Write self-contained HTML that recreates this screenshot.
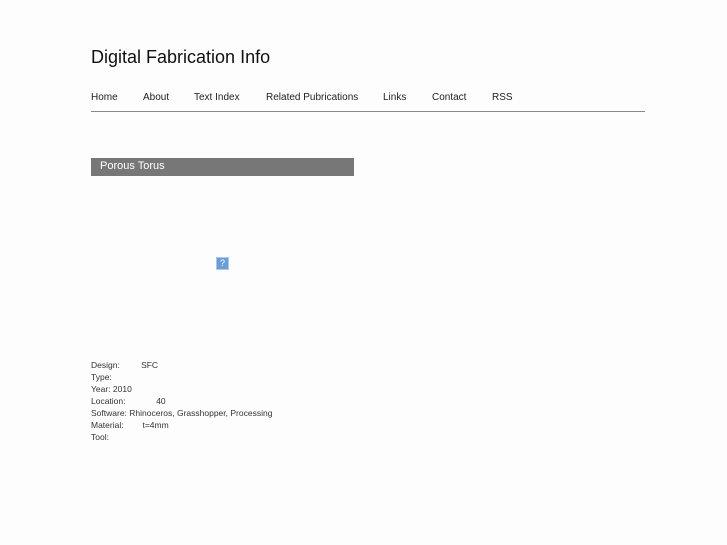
<!DOCTYPE html>
<html><head><meta charset="utf-8"><style>
body{margin:0;background:#fdfdfd;font-family:"Liberation Sans",sans-serif;color:#222;width:727px;height:545px;overflow:hidden;position:relative}
.a{position:absolute;white-space:nowrap}
.nav{font-size:10px;top:92px}
.d{font-size:8.5px;color:#333;left:91px}
</style></head><body>
<div class="a" style="left:91px;top:47px;font-size:18px;color:#111">Digital Fabrication Info</div>
<div class="a nav" style="left:91px">Home</div>
<div class="a nav" style="left:143px">About</div>
<div class="a nav" style="left:194px">Text Index</div>
<div class="a nav" style="left:266px">Related Pubrications</div>
<div class="a nav" style="left:383px">Links</div>
<div class="a nav" style="left:432px">Contact</div>
<div class="a nav" style="left:492px">RSS</div>
<div class="a" style="left:91px;top:111px;width:554px;height:1px;background:#888"></div>
<div class="a" style="left:91px;top:158px;width:263px;height:18px;background:#777;color:#fff;font-size:11px;line-height:17px;padding-left:9px;box-sizing:border-box">Porous Torus</div>
<div class="a" style="left:216px;top:257px;width:13px;height:13px;background:#6a9fd4;border:1px solid #a8c8e8;box-sizing:border-box;color:#fff;font-size:9px;text-align:center;line-height:11px">?</div>
<div class="a d" style="top:360px">Design:&nbsp;&nbsp;&nbsp;&nbsp;&nbsp;&nbsp;&nbsp;&nbsp;&nbsp;SFC</div>
<div class="a d" style="top:372px">Type:</div>
<div class="a d" style="top:384px">Year: 2010</div>
<div class="a d" style="top:396px">Location:&nbsp;&nbsp;&nbsp;&nbsp;&nbsp;&nbsp;&nbsp;&nbsp;&nbsp;&nbsp;&nbsp;&nbsp;&nbsp;40</div>
<div class="a d" style="top:408px">Software: Rhinoceros, Grasshopper, Processing</div>
<div class="a d" style="top:420px">Material:&nbsp;&nbsp;&nbsp;&nbsp;&nbsp;&nbsp;&nbsp;&nbsp;t=4mm</div>
<div class="a d" style="top:432px">Tool:</div>
</body></html>
